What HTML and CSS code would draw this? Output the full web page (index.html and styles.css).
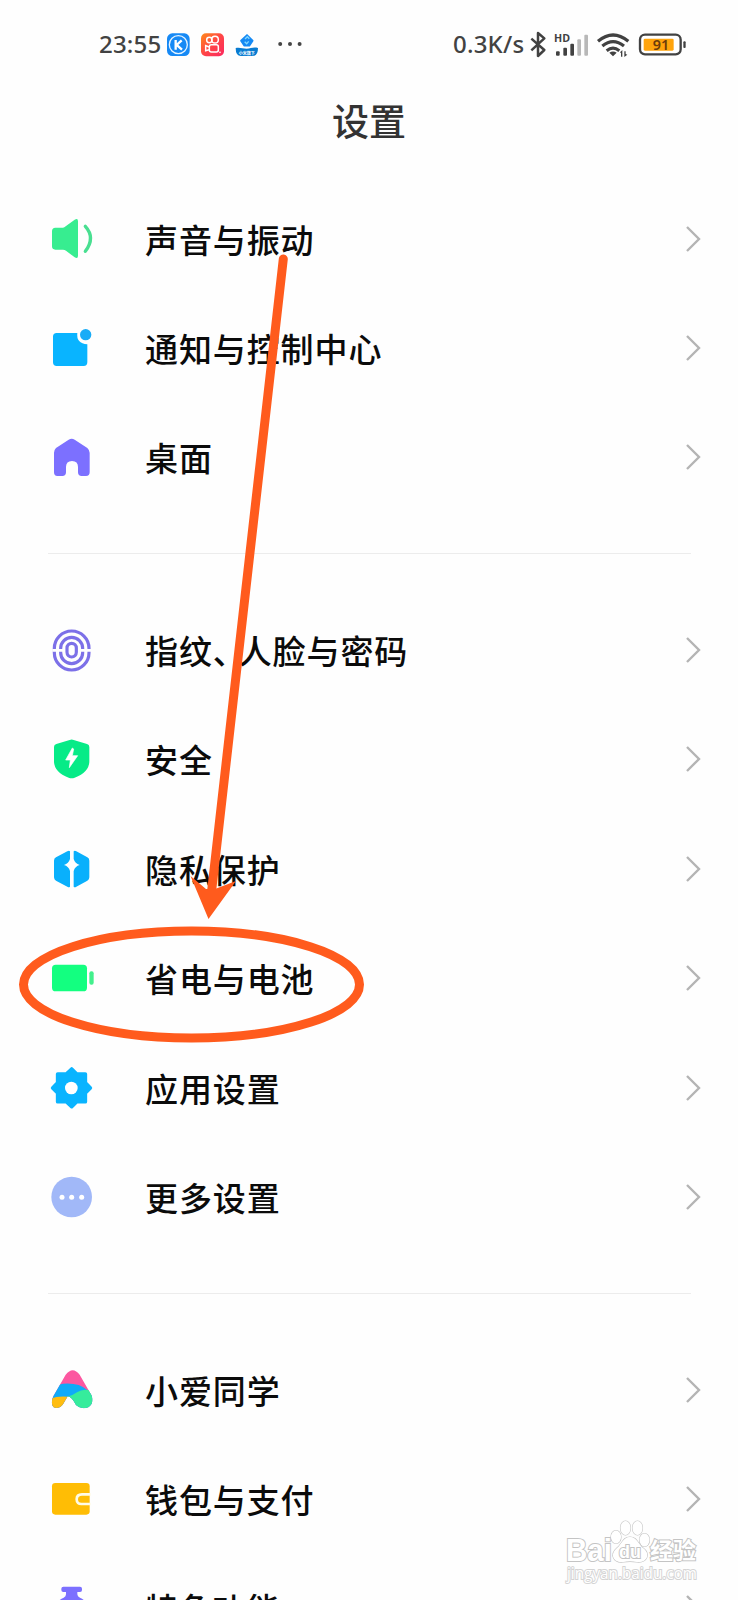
FILE: index.html
```html
<!DOCTYPE html>
<html lang="zh-CN">
<head>
<meta charset="utf-8">
<title>设置</title>
<link rel="stylesheet" href="styles.css">
</head>
<body>
<svg class="defs" width="0" height="0"><symbol id="chevron" viewBox="0 0 16 28"><path d="M2 2 14 14 2 26" fill="none" stroke="#b4b4b4" stroke-width="2.4"/></symbol></svg>
<main class="phone">
  <header class="status">
    <div class="status-left">
      <span class="clock">23:55</span>
      <svg class="app" viewBox="258 33 75 75"><rect x="261" y="37" width="68" height="68" rx="16" fill="#1689f5"/><circle cx="295" cy="71" r="27" fill="none" stroke="#e4f3ff" stroke-width="4"/><path d="M287 57v29M305 58 290 72 306 86" fill="none" stroke="#fff" stroke-width="7"/></svg>
      <svg class="app" viewBox="360 33 75 75"><defs><linearGradient id="ks" x1="0" y1="0" x2="1" y2="1"><stop stop-color="#ff8a18"/><stop offset=".5" stop-color="#ff4547"/><stop offset="1" stop-color="#fb2860"/></linearGradient></defs><rect x="363" y="37" width="69" height="69" rx="15" fill="url(#ks)"/><g fill="none" stroke="#fff" stroke-width="4.5"><circle cx="388" cy="57" r="8"/><circle cx="405" cy="56" r="10"/><rect x="388" y="71" width="27" height="22" rx="6"/><path d="M387 78l-10-4v15l10-3"/></g><circle cx="420" cy="94" r="2.5" fill="#fff"/></svg>
      <svg class="app" viewBox="462 33 75 75"><path d="M501 42l17 17-10 15h-15l-10-15z" fill="#168af4" stroke="#168af4" stroke-width="5" stroke-linejoin="round"/><path d="M495 54l7-7 6 6M506 61l-6 7-6-6" stroke="#7fd6ff" stroke-width="4" fill="none"/><path d="M467 81c13-3 21 2 33 2s20-6 34-2q0 24-17 24h-34q-16 0-16-24" fill="#087bd1"/><text class="tiny" x="500" y="101" text-anchor="middle">小米旗下</text></svg>
      <svg class="dots" viewBox="0 0 24 6"><g fill="#454545"><circle cx="2.2" cy="3" r="2"/><circle cx="12" cy="3" r="2"/><circle cx="21.6" cy="3" r="2"/></g></svg>
    </div>
    <div class="status-right">
      <span class="speed">0.3K/s</span>
      <svg class="signals" viewBox="264 24 480 93">
        <path d="M274 53 313 87 294 105V36L313 52 274 88" fill="none" stroke="#414141" stroke-width="7.5" stroke-linejoin="round"/>
        <text class="hd" x="342" y="63" textLength="48" lengthAdjust="spacingAndGlyphs">HD</text>
        <g fill="#414141"><rect x="348" y="91" width="11" height="13" rx="3"/><rect x="370" y="80" width="11" height="24" rx="3"/><rect x="391" y="68" width="11" height="36" rx="3"/></g><g fill="#b8b8b8"><rect x="412" y="55" width="11" height="49" rx="3"/><rect x="433" y="41" width="11" height="63" rx="3"/></g>
        <g fill="none" stroke="#414141" stroke-width="9.5"><path d="M474 61Q519 23 565 61M487 75Q519 49 552 75M500 89Q519 74 538 89"/></g><path d="M508 95q11-7 22 0l-11 11zM540 94l7-7v20h-4V96zM562 101l-9 7V91h4v8z" fill="#414141"/>
        <rect x="600" y="41" width="122" height="59" rx="15" fill="#fff" stroke="#424242" stroke-width="7"/><rect x="611" y="53" width="90" height="36" rx="4" fill="#ffa40c"/><rect x="730" y="61" width="7" height="20" rx="3" fill="#424242"/><text class="charge" x="663" y="87" text-anchor="middle">91</text>
      </svg>
    </div>
  </header>
  <h1 class="title">设置</h1>
  <section class="group">
    <div class="row"><svg class="icon" viewBox="36 27 180 180"><g fill="#37ed90"><path d="M76 83h23q4 0 8-4l27-20q10-6 10 5v103q0 11-10 5l-26-20q-4-3-9-3H76q-10 0-10-10V94q0-11 10-11"/><path d="M166 79q31 34 0 75" fill="none" stroke="#49df91" stroke-width="10" stroke-linecap="round"/></g></svg><span class="label">声音与振动</span><svg class="arrow"><use href="#chevron"/></svg></div>
    <div class="row"><svg class="icon" viewBox="36 354 180 180"><path d="M80 399h62q-4 31 30 34v53q0 12-11 12H80q-11 0-11-11v-77q0-11 11-11" fill="#09b4ff"/><circle cx="167" cy="404" r="17" fill="#18acf7"/></svg><span class="label">通知与控制中心</span><svg class="arrow"><use href="#chevron"/></svg></div>
    <div class="row"><svg class="icon" viewBox="36 681 180 180"><path d="M78 744l38-25q9-5 18 0l38 25q7 7 7 14v59q0 11-11 11h-13q-11 0-11-11v-16q0-18-18-18t-18 18v16q0 11-11 11H82q-10 0-10-11v-59q0-8 6-14" fill="#7c70ff"/></svg><span class="label">桌面</span><svg class="arrow"><use href="#chevron"/></svg></div>
  </section>
  <hr class="divider">
  <section class="group">
    <div class="row"><svg class="icon" viewBox="36 31 180 180"><g fill="none" stroke="#7c70e8" stroke-width="9.5"><rect x="73" y="64" width="104" height="117" rx="52"/><rect x="92" y="83" width="66" height="79" rx="33"/><rect x="111" y="101" width="28" height="41" rx="14"/></g><path d="M67 122h37M147 122h37" stroke="#fefefe" stroke-width="8"/></svg><span class="label">指纹<span class="pause">、</span>人脸与密码</span><svg class="arrow"><use href="#chevron"/></svg></div>
    <div class="row"><svg class="icon" viewBox="36 359 180 180"><path d="M119 392q6-3 12 0l40 12q7 2 7 9v43q0 32-44 49-9 4-18 0-44-17-44-49v-43q0-7 7-9z" fill="#06eb87"/><path d="M127 416 107 452h14l-3 23 25-36h-16l4-20z" fill="#fff" stroke="#fff" stroke-width="2" stroke-linejoin="round"/></svg><span class="label">安全</span><svg class="arrow"><use href="#chevron"/></svg></div>
    <div class="row"><svg class="icon" viewBox="36 687 180 180"><path d="M120 724q-3-3-8 0l-34 18q-6 3-6 10v50q0 7 6 10l34 18q5 3 8 0v-47q-4-14-18-18 14-4 18-18zM131 724q3-3 8 0l33 18q6 3 6 10v50q0 7-6 10l-33 18q-5 3-8 0v-47q4-14 18-18-14-4-18-18z" fill="#09b0fc"/></svg><span class="label">隐私保护</span><svg class="arrow"><use href="#chevron"/></svg></div>
    <div class="row"><svg class="icon" viewBox="96 145 180 180"><rect x="126" y="195" width="105" height="80" rx="11" fill="#13ff80"/><rect x="238" y="215" width="13" height="40" rx="6" fill="#42f08c"/></svg><span class="label">省电与电池</span><svg class="arrow"><use href="#chevron"/></svg></div>
    <div class="row"><svg class="icon" viewBox="96 474 180 180"><path d="M185 507l15 15h26v26l15 16-15 15v26h-26l-15 15-16-15h-26v-26l-15-15 15-16v-26h26z" fill="#09b4ff" stroke="#09b4ff" stroke-width="11" stroke-linejoin="round"/><circle cx="184" cy="564" r="19" fill="#fff"/></svg><span class="label">应用设置</span><svg class="arrow"><use href="#chevron"/></svg></div>
    <div class="row"><svg class="icon" viewBox="96 802 180 180"><circle cx="185" cy="892" r="61" fill="#a1b8f8"/><g fill="#fff"><circle cx="156" cy="893" r="7.5"/><circle cx="185" cy="893" r="7.5"/><circle cx="215" cy="893" r="7.5"/></g></svg><span class="label">更多设置</span><svg class="arrow"><use href="#chevron"/></svg></div>
  </section>
  <hr class="divider">
  <section class="group">
    <div class="row"><svg class="icon" viewBox="36 29 180 180"><clipPath id="peak"><path d="M107 73Q128 46 149 73L184 134Q193 157 176 170Q155 180 138 164Q126 140 113 138L98 163Q86 179 70 170Q61 158 70 138Z"/></clipPath><g clip-path="url(#peak)"><path d="M60 50h140v130H60z" fill="#fc57a0"/><path d="M60 160V118Q90 94 130 101 165 104 192 140V180H60z" fill="#10aaf8"/><path d="M60 146q20-10 54-7L100 180H60z" fill="#ffbd10"/><path d="M111 139q17-3 30-13 20-14 54-2v60h-65z" fill="#36ec9c"/></g></svg><span class="label">小爱同学</span><svg class="arrow"><use href="#chevron"/></svg></div>
    <div class="row"><svg class="icon" viewBox="36 357 180 180"><rect x="66" y="399" width="113" height="95" rx="10" fill="#ffbd05"/><path d="M182 433h-26q-16 0-16 15t16 14h26" fill="none" stroke="#fffbe6" stroke-width="8"/></svg><span class="label">钱包与支付</span><svg class="arrow"><use href="#chevron"/></svg></div>
    <div class="row"><svg class="icon" viewBox="36 685 180 180"><path d="M100 711h50q6 0 6 6v4q0 6-6 6h-8v7q0 7 8 10 22 8 22 40 0 30-47 30t-47-30q0-32 23-40 7-3 7-10v-7h-8q-6 0-6-6v-4q0-6 6-6" fill="#7c70ff"/></svg><span class="label">特色功能</span><svg class="arrow"><use href="#chevron"/></svg></div>
  </section>
  <svg class="overlay" viewBox="0 0 738 1600">
    <path d="M283.3 259 211.5 892" fill="none" stroke="#ff5b1d" stroke-width="9" stroke-linecap="round"/>
    <path d="M190.5 876 206 889H215L236 881 208.5 919z" fill="#ff5b1d"/>
    <ellipse cx="191.5" cy="984.5" rx="168" ry="53.5" fill="none" stroke="#ff5b1d" stroke-width="9"/>
    <g class="watermark">
      <text class="wm-brand" x="566" y="1561" textLength="46" lengthAdjust="spacingAndGlyphs">Bai</text>
      <g><ellipse cx="616" cy="1537" rx="5" ry="6.5"/><ellipse cx="625.5" cy="1528" rx="5" ry="7"/><ellipse cx="637.5" cy="1528" rx="5" ry="7"/><ellipse cx="644.5" cy="1540" rx="5" ry="6.5"/><path d="M630 1537c-7 0-8 7-13 11-8 7-3 15 6 14 5-1 9-1 14 0 10 1 14-8 6-14-5-4-6-11-13-11z"/></g>
      <text class="wm-du" x="619" y="1558" textLength="22" lengthAdjust="spacingAndGlyphs">du</text>
      <text class="wm-cjk" x="650" y="1559" textLength="46">经验</text>
      <text class="wm-url" x="567" y="1579" textLength="130" lengthAdjust="spacingAndGlyphs">jingyan.baidu.com</text>
    </g>
  </svg>
</main>
</body>
</html>
```
FILE: styles.css
```css
* { box-sizing: border-box; }
body { margin: 0; background: #fff; color: #0b0b0b; font-family: "Noto Sans CJK SC", sans-serif; }
.defs { position: absolute; }
.phone { position: relative; width: 738px; height: 1600px; overflow: hidden; background: #fefefe; }
.status { height: 88px; padding: 0 50px 0 98px; display: flex; justify-content: space-between; align-items: center; color: #424242; }
.status-left, .status-right { display: flex; align-items: center; height: 36px; }
.clock, .speed { font: 500 24px/36px "Noto Sans", sans-serif; white-space: nowrap; padding-bottom: 1px; }
.clock { width: 68px; padding-left: 1px; letter-spacing: .2px; }
.app { width: 25px; height: 25px; margin-right: 9px; }
.tiny { font: 700 12px "Noto Sans CJK SC", sans-serif; fill: #fff; }
.dots { width: 24px; height: 6px; margin-left: 10px; }
.speed { width: 75px; letter-spacing: .2px; }
.signals { width: 160px; height: 31px; }
.hd { font: 700 34px "Open Sans", sans-serif; fill: #414141; }
.charge { font: 600 43px "Noto Sans", sans-serif; fill: #6b3b0a; }
.title { height: 96px; margin: 0; padding-top: 6px; color: #333; font: 500 37px/52px "Noto Sans CJK SC", sans-serif; text-align: center; }
.group { display: flex; flex-direction: column; }
.row { height: 109.4px; flex: none; padding: 0 37px 0 42px; display: flex; align-items: center; }
.icon { width: 60px; height: 60px; flex: none; }
.label { flex: 1; padding-left: 43px; font-size: 33px; font-weight: 500; line-height: 48px; letter-spacing: .9px; white-space: nowrap; }
.pause { margin-right: -8px; }
.arrow { width: 16px; height: 28px; flex: none; }
.divider { height: 1px; margin: 41px 47px 41.2px 48px; border: 0; background: #ececec; }
.overlay { position: absolute; inset: 0; width: 738px; height: 1600px; }
.watermark { fill: #fff; stroke: #c4c4c4; stroke-width: 1.2; paint-order: stroke; }
.wm-brand { font: 700 31px "Liberation Sans", sans-serif; stroke-width: 2px; }
.wm-du { font: 700 18px "Liberation Sans", sans-serif; stroke-width: 2px; }
.wm-cjk { font: 700 23px "Noto Sans CJK SC", sans-serif; stroke-width: 2px; }
.wm-url { font: 400 16px "Open Sans", sans-serif; stroke: #d4d4d4; stroke-width: 2px; }
```
